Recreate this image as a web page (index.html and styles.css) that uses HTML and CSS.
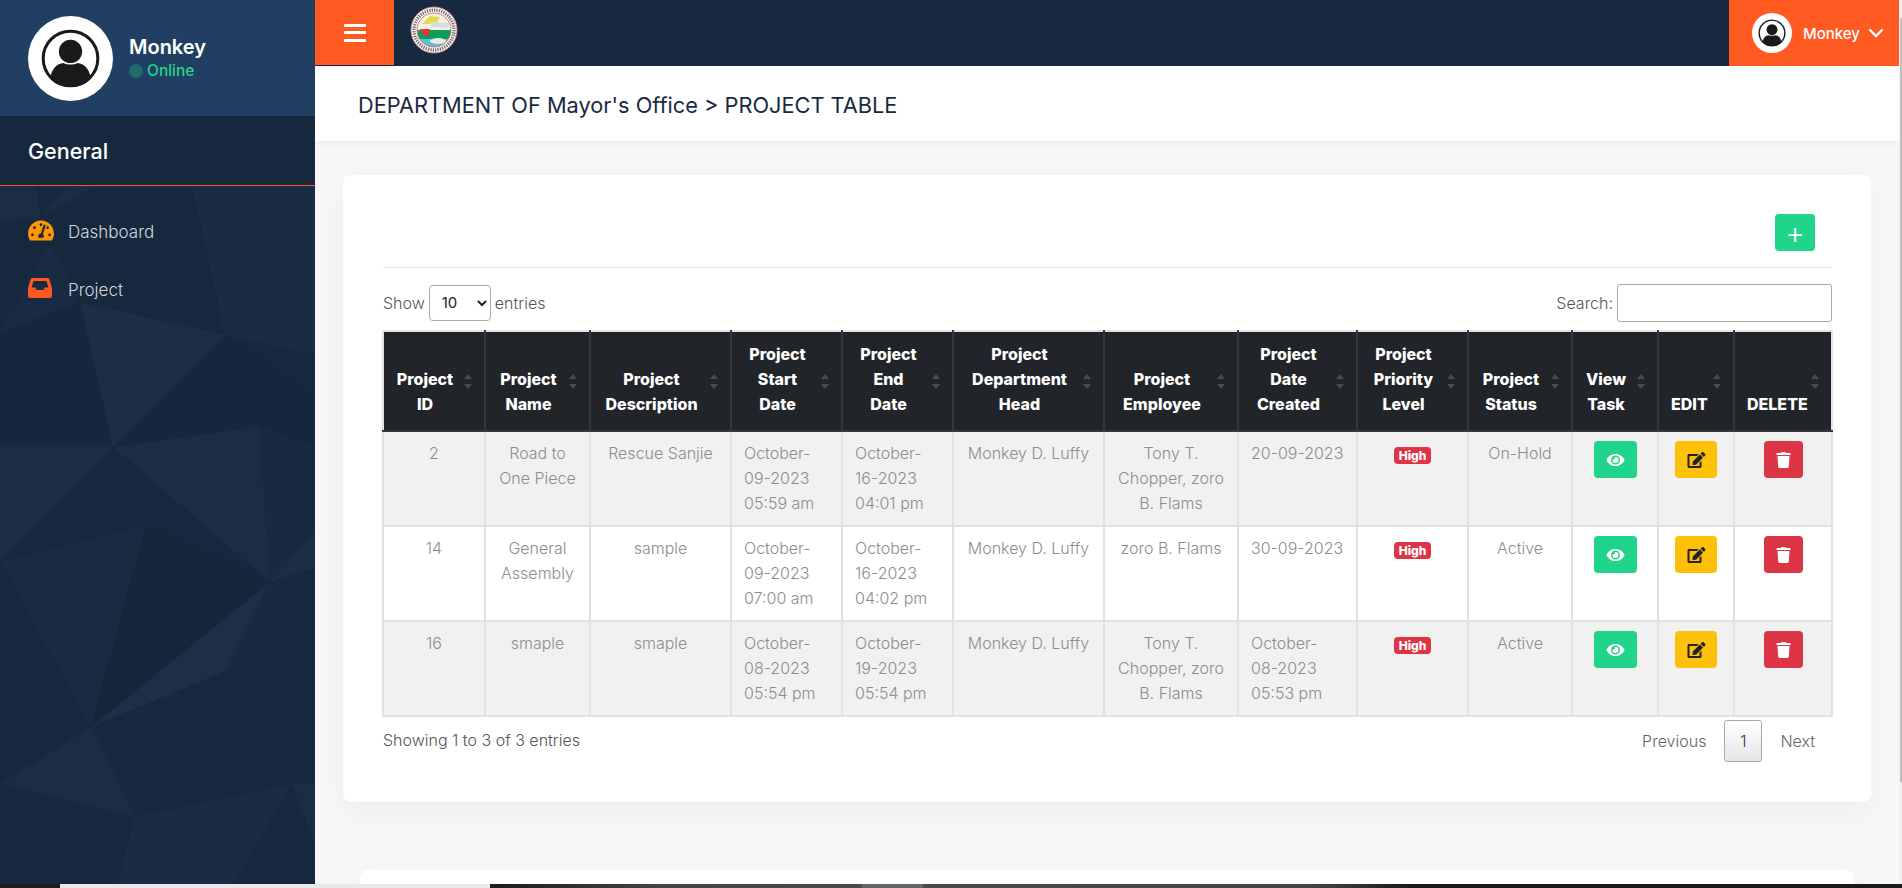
FILE: index.html
```html
<!DOCTYPE html>
<html lang="en">
<head>
  <meta charset="UTF-8" />
  <title>Project Table</title>
  <link rel="stylesheet" href="styles.css">
</head>
<body>
  <svg class="icon-defs" width="0" height="0">
    <symbol id="avatar" viewBox="0 0 84 84">
      <circle cx="42" cy="42" r="42" fill="#fff"/>
      <circle cx="42" cy="42" r="27" fill="none" stroke="#1a1a1c" stroke-width="3"/>
      <circle cx="42" cy="35" r="11.5" fill="#1a1a1c"/>
      <path d="M22 62c1-10 7-15 13-15.500c4 2 10 2 14 0c6 .5 12 5.500 13 15.500c-5 5-12 7.500-20 7.500s-15-2.500-20-7.500z" fill="#1a1a1c"/>
    </symbol>
    <symbol id="eye" viewBox="0 0 576 512">
      <path d="M572.52 241.4C518.29 135.59 410.93 64 288 64S57.68 135.64 3.48 241.41a32.35 32.35 0 0 0 0 29.19C57.71 376.41 165.07 448 288 448s230.32-71.64 284.52-177.41a32.35 32.35 0 0 0 0-29.19zM288 400a144 144 0 1 1 144-144 143.93 143.93 0 0 1-144 144zm0-240a95.31 95.31 0 0 0-25.31 3.79 47.85 47.85 0 0 1-66.9 66.9A95.78 95.78 0 1 0 288 160z"/>
    </symbol>
    <symbol id="edit" viewBox="0 0 576 512">
      <path d="M402.6 83.2l90.2 90.2c3.8 3.8 3.8 10 0 13.8L274.4 405.6l-92.8 10.3c-12.4 1.4-22.9-9.1-21.5-21.5l10.3-92.8L388.8 83.2c3.8-3.8 10-3.8 13.8 0zm162-22.900l-48.800-48.800c-15.200-15.200-39.900-15.200-55.200 0l-35.400 35.400c-3.800 3.800-3.800 10 0 13.800l90.200 90.200c3.800 3.800 10 3.800 13.800 0l35.400-35.400c15.200-15.300 15.200-40 0-55.200zM384 346.200V448H64V128h229.800c3.200 0 6.200-1.300 8.500-3.500l40-40c7.600-7.600 2.200-20.500-8.500-20.500H48C21.500 64 0 85.500 0 112v352c0 26.500 21.500 48 48 48h352c26.500 0 48-21.500 48-48V306.200c0-10.700-12.900-16-20.500-8.500l-40 40c-2.200 2.300-3.500 5.300-3.500 8.500z"/>
    </symbol>
    <symbol id="trash" viewBox="0 0 448 512">
      <path d="M432 32H312l-9.400-18.700A24 24 0 0 0 281.100 0H166.800a23.720 23.720 0 0 0-21.400 13.300L136 32H16A16 16 0 0 0 0 48v32a16 16 0 0 0 16 16h416a16 16 0 0 0 16-16V48a16 16 0 0 0-16-16zM53.200 467a48 48 0 0 0 47.900 45h245.800a48 48 0 0 0 47.900-45L416 128H32z"/>
    </symbol>
  </svg>

  <div class="app">
    <aside class="sidebar">
      <svg class="sidebar-bg" viewBox="0 0 315 698">
        <polygon points="0,0 36,0 40,31 0,36" fill="#1a2d44"/>
        <polygon points="40,31 67,0 97,0" fill="#1a2d44"/>
        <polygon points="192,0 315,0 315,169 225,149" fill="#192c43"/>
        <polygon points="0,147 50,58 80,116" fill="#192b42"/>
        <polygon points="0,147 80,116 113,261 0,261" fill="#15273c"/>
        <polygon points="80,116 225,149 113,261" fill="#1b2e45"/>
        <polygon points="113,261 259,240 270,396" fill="#1a2d44"/>
        <polygon points="225,149 315,210 315,260 259,240 113,261" fill="#15273c"/>
        <polygon points="259,240 315,260 315,347 270,396" fill="#182a41"/>
        <polygon points="0,261 113,261 0,375" fill="#1a2d44"/>
        <polygon points="0,375 146,340 91,541" fill="#182b41"/>
        <polygon points="146,340 270,396 91,541" fill="#15263b"/>
        <polygon points="91,541 270,396 226,485" fill="#1c2f47"/>
        <polygon points="270,396 315,347 315,382" fill="#1b2e45"/>
        <polygon points="270,396 315,440 315,515 226,485" fill="#172a40"/>
        <polygon points="0,598 91,541 135,631" fill="#1a2d44"/>
        <polygon points="135,631 292,598 233,698 117,698" fill="#192c43"/>
        <polygon points="292,598 315,598 315,658" fill="#1a2d44"/>
      </svg>
      <div class="user-panel">
        <svg class="avatar-lg"><use href="#avatar"/></svg>
        <div>
          <div class="user-name">Monkey</div>
          <div class="user-status"><span class="status-dot"></span>Online</div>
        </div>
      </div>
      <div class="nav-title">General</div>
      <nav class="nav">
        <a class="nav-item">
          <svg class="nav-icon icon-gauge" viewBox="0 0 576 512"><path d="M288 32C128.940 32 0 160.940 0 320c0 52.800 14.250 102.260 39.060 144.800 5.610 9.620 16.300 15.200 27.440 15.200h443c11.140 0 21.830-5.580 27.440-15.200C561.750 422.260 576 372.800 576 320c0-159.060-128.940-288-288-288zm0 64c14.710 0 26.580 10.130 30.320 23.650-1.110 2.260-2.640 4.230-3.450 6.670l-9.220 27.670c-5.130 3.490-10.970 6.010-17.640 6.010-17.670 0-32-14.330-32-32S270.330 96 288 96zM96 384c-17.670 0-32-14.330-32-32s14.330-32 32-32 32 14.330 32 32-14.330 32-32 32zm48-160c-17.670 0-32-14.330-32-32s14.330-32 32-32 32 14.330 32 32-14.330 32-32 32zm246.770-72.410l-61.330 184C343.130 347.330 352 364.540 352 384c0 11.720-3.380 22.550-8.880 32H232.880c-5.500-9.450-8.880-20.280-8.880-32 0-33.940 26.500-61.430 59.900-63.590l61.340-184.010c4.170-12.560 17.730-19.450 30.360-15.170 12.570 4.190 19.350 17.790 15.170 30.360zm14.660 57.200l15.520-46.550c3.470-1.290 7.130-2.230 11.050-2.230 17.670 0 32 14.330 32 32s-14.330 32-32 32c-11.380-.010-20.890-6.280-26.570-15.220zM480 384c-17.670 0-32-14.330-32-32s14.330-32 32-32 32 14.330 32 32-14.330 32-32 32z"/></svg>
          Dashboard
        </a>
        <a class="nav-item">
          <svg class="nav-icon icon-inbox" viewBox="0 0 24 20"><path fill-rule="evenodd" d="M4.500 0h15c1 0 1.700.6 2 1.500L24 10v8a2 2 0 0 1-2 2H2a2 2 0 0 1-2-2v-8L2.500 1.500C2.800.6 3.500 0 4.500 0zM5.500 3L3.600 9.500H7.500l1 2.500h7l1-2.500h3.900L18.500 3z"/></svg>
          Project
        </a>
      </nav>
    </aside>

    <div class="main">
      <header class="topbar">
        <button class="menu-toggle"><span></span><span></span><span></span></button>
        <svg class="seal" viewBox="0 0 48 48">
          <circle cx="24" cy="24" r="23" fill="#fff" stroke="#d98a8a" stroke-width="1"/>
          <circle cx="24" cy="24" r="20" fill="none" stroke="#777" stroke-width="3.400" stroke-dasharray="1.400 1"/>
          <clipPath id="seal-clip"><circle cx="24" cy="24" r="17"/></clipPath>
          <g clip-path="url(#seal-clip)">
            <rect x="6" y="6" width="36" height="36" fill="#f4f4ea"/>
            <polygon points="12,18 20,10 30,11 26,18" fill="#e2dc4c"/>
            <polygon points="20,16 40,17 38,22 22,21" fill="#dcdcdc"/>
            <rect x="6" y="24" width="36" height="9" fill="#0f9b58"/>
            <polygon points="10,23 20,23 19,29 14,30" fill="#e0363c"/>
            <rect x="6" y="33" width="36" height="10" fill="#5ec0d8"/>
            <ellipse cx="28" cy="35" rx="8" ry="3" fill="#e8e8e8"/>
          </g>
          <circle cx="24" cy="24" r="17" fill="none" stroke="#e0504f" stroke-width="0.800"/>
        </svg>
        <div class="topbar-user">
          <svg class="avatar-sm"><use href="#avatar"/></svg>
          <span class="topbar-name">Monkey</span>
          <svg class="chevron" viewBox="0 0 16 10"><path d="M1.500 1.500L8 8l6.500-6.500" fill="none" stroke="#fff" stroke-width="2.400"/></svg>
        </div>
      </header>

      <div class="page-head">
        <h1>DEPARTMENT OF Mayor's Office &gt; PROJECT TABLE</h1>
      </div>

      <div class="content">
        <section class="card">
          <div class="card-top">
            <button class="add-btn">+</button>
          </div>

          <div class="table-controls">
            <label class="ctl">Show
              <select class="length-select"><option>10</option></select>
              entries</label>
            <label class="ctl">Search:<input class="search-input" type="text" /></label>
          </div>

          <table class="data-table">
            <colgroup>
              <col class="c-id"><col class="c-name"><col class="c-desc"><col class="c-start"><col class="c-end"><col class="c-head"><col class="c-emp"><col class="c-created"><col class="c-prio"><col class="c-status"><col class="c-view"><col class="c-edit"><col class="c-del">
            </colgroup>
            <thead>
              <tr>
                <th class="sort">Project<br>ID</th>
                <th class="sort">Project<br>Name</th>
                <th class="sort">Project<br>Description</th>
                <th class="sort">Project<br>Start<br>Date</th>
                <th class="sort">Project<br>End<br>Date</th>
                <th class="sort">Project<br>Department<br>Head</th>
                <th class="sort">Project<br>Employee</th>
                <th class="sort">Project<br>Date<br>Created</th>
                <th class="sort">Project<br>Priority<br>Level</th>
                <th class="sort">Project<br>Status</th>
                <th class="sort">View<br>Task</th>
                <th class="sort th-left">EDIT</th>
                <th class="sort th-left">DELETE</th>
              </tr>
            </thead>
            <tbody>
              <tr>
                <td>2</td>
                <td>Road to<br>One Piece</td>
                <td>Rescue Sanjie</td>
                <td class="td-left">October-<br>09-2023<br>05:59 am</td>
                <td class="td-left">October-<br>16-2023<br>04:01 pm</td>
                <td>Monkey D. Luffy</td>
                <td>Tony T.<br>Chopper, zoro<br>B. Flams</td>
                <td class="td-left">20-09-2023</td>
                <td><span class="badge">High</span></td>
                <td>On-Hold</td>
                <td><button class="act act-view"><svg><use href="#eye"/></svg></button></td>
                <td><button class="act act-edit"><svg><use href="#edit"/></svg></button></td>
                <td><button class="act act-del"><svg><use href="#trash"/></svg></button></td>
              </tr>
              <tr>
                <td>14</td>
                <td>General<br>Assembly</td>
                <td>sample</td>
                <td class="td-left">October-<br>09-2023<br>07:00 am</td>
                <td class="td-left">October-<br>16-2023<br>04:02 pm</td>
                <td>Monkey D. Luffy</td>
                <td>zoro B. Flams</td>
                <td class="td-left">30-09-2023</td>
                <td><span class="badge">High</span></td>
                <td>Active</td>
                <td><button class="act act-view"><svg><use href="#eye"/></svg></button></td>
                <td><button class="act act-edit"><svg><use href="#edit"/></svg></button></td>
                <td><button class="act act-del"><svg><use href="#trash"/></svg></button></td>
              </tr>
              <tr>
                <td>16</td>
                <td>smaple</td>
                <td>smaple</td>
                <td class="td-left">October-<br>08-2023<br>05:54 pm</td>
                <td class="td-left">October-<br>19-2023<br>05:54 pm</td>
                <td>Monkey D. Luffy</td>
                <td>Tony T.<br>Chopper, zoro<br>B. Flams</td>
                <td class="td-left">October-<br>08-2023<br>05:53 pm</td>
                <td><span class="badge">High</span></td>
                <td>Active</td>
                <td><button class="act act-view"><svg><use href="#eye"/></svg></button></td>
                <td><button class="act act-edit"><svg><use href="#edit"/></svg></button></td>
                <td><button class="act act-del"><svg><use href="#trash"/></svg></button></td>
              </tr>
            </tbody>
          </table>

          <div class="table-footer">
            <div>Showing 1 to 3 of 3 entries</div>
            <div class="pager">
              <a>Previous</a>
              <a class="page-current">1</a>
              <a>Next</a>
            </div>
          </div>
        </section>

        <section class="card card-next"></section>
      </div>
    </div>

    <div class="scrollbar"><div class="scrollbar-thumb"></div></div>
  </div>

  <div class="taskbar">
    <div class="task-a"></div>
    <div class="task-b"></div>
    <div class="task-c"></div>
    <div class="task-d"></div>
    <div class="task-e"></div>
  </div>
</body>
</html>
```

FILE: styles.css
```css
* {
  box-sizing: border-box;
}

html, body {
  height: 100%;
}

body {
  margin: 0;
  height: 888px;
  overflow: hidden;
  display: flex;
  flex-direction: column;
  font-family: Inter, "Open Sans", sans-serif;
  font-weight: 300;
  font-size: 16px;
  color: #555;
  background: #f7f7f7;
}

.icon-defs {
  position: absolute;
}

.app {
  flex: 1;
  min-height: 0;
  display: flex;
}

/* sidebar */
.sidebar {
  position: relative;
  width: 315px;
  flex: none;
  background: #16283e;
  overflow: hidden;
}

.sidebar-bg {
  position: absolute;
  left: 0;
  top: 186px;
  width: 315px;
  height: 698px;
}

.user-panel {
  position: relative;
  height: 116px;
  display: flex;
  align-items: center;
  gap: 16px;
  padding-left: 28px;
  background: #203f62;
}

.avatar-lg {
  width: 85px;
  height: 85px;
}

.user-name {
  color: #fff;
  font-size: 20px;
  font-weight: 600;
  line-height: 26px;
}

.user-status {
  display: flex;
  align-items: center;
  gap: 4px;
  color: #20d489;
  font-size: 15.500px;
  font-weight: 500;
  line-height: 22px;
}

.status-dot {
  width: 14px;
  height: 14px;
  border-radius: 50%;
  background: #1f6b6b;
}

.nav-title {
  position: relative;
  height: 70px;
  padding: 22px 0 0 28px;
  color: #fff;
  font-size: 21.500px;
  font-weight: 500;
  border-bottom: 1px solid #ff5722;
}

.nav {
  position: relative;
  padding-top: 17px;
}

.nav-item {
  display: flex;
  align-items: center;
  height: 58px;
  padding-left: 28px;
  color: #d3d6da;
  font-size: 17px;
  font-weight: 300;
}

.nav-icon {
  width: 26px;
  height: 23px;
  margin: -4px 14px 0 0;
}

.icon-gauge {
  fill: #ff9800;
}

.icon-inbox {
  fill: #ff5722;
  width: 24px;
  height: 20px;
  margin-right: 16px;
}

/* main */
.main {
  flex: 1;
  min-width: 0;
  display: flex;
  flex-direction: column;
}

.topbar {
  height: 66px;
  flex: none;
  display: flex;
  align-items: flex-start;
  background: #17293f;
}

.menu-toggle {
  width: 79px;
  height: 65px;
  border: none;
  padding: 0;
  background: #ff5a22;
  display: flex;
  flex-direction: column;
  align-items: center;
  justify-content: center;
  gap: 4.500px;
}

.menu-toggle span {
  display: block;
  width: 22px;
  height: 3px;
  background: #fff;
  border-radius: 1px;
}

.seal {
  width: 48px;
  height: 48px;
  margin: 6px 0 0 16px;
}

.topbar-user {
  margin-left: auto;
  width: 170px;
  height: 66px;
  display: flex;
  align-items: center;
  padding-left: 23px;
  background: #ff5a22;
  color: #fff;
}

.avatar-sm {
  width: 40px;
  height: 40px;
}

.topbar-name {
  margin-left: 11px;
  font-size: 15px;
  font-weight: 500;
}

.chevron {
  width: 16px;
  height: 10px;
  margin-left: 8px;
}

.page-head {
  height: 75px;
  flex: none;
  display: flex;
  align-items: center;
  padding: 3px 0 0 43px;
  background: #fff;
  box-shadow: 0 2px 6px rgba(0, 0, 0, 0.05);
}

.page-head h1 {
  margin: 0;
  font-size: 21.750px;
  font-weight: 400;
  color: #1a2942;
}

.content {
  flex: 1;
  min-height: 0;
  overflow: hidden;
  padding: 34px 28px 0;
}

.card {
  height: 627px;
  padding: 0 39px 0 40px;
  background: #fff;
  border-radius: 8px;
  box-shadow: 0 10px 30px rgba(0, 0, 0, 0.04);
}

.card-next {
  height: 100px;
  margin: 68px 17px 0;
}

.card-top {
  height: 93px;
  display: flex;
  justify-content: flex-end;
  align-items: flex-start;
  padding: 39px 17px 0 0;
  border-bottom: 1px solid #e3e3e3;
}

.add-btn {
  width: 40px;
  height: 37px;
  border: none;
  border-radius: 4px;
  background: #20d489;
  color: #fff;
  font-family: Inter, sans-serif;
  font-size: 30px;
  font-weight: 300;
  line-height: 1;
  padding: 0;
}

.table-controls {
  display: flex;
  justify-content: space-between;
  align-items: center;
  height: 38px;
  margin-top: 16px;
}

.ctl {
  display: flex;
  align-items: center;
  gap: 4px;
}

.length-select {
  width: 62px;
  height: 36px;
  margin-top: -1px;
  padding: 0 4px 0 8px;
  border: 1px solid #aaa;
  border-radius: 4px;
  background: #fff;
  font-family: Inter, sans-serif;
  font-size: 15px;
  color: #222;
}

.search-input {
  width: 215px;
  height: 38px;
  border: 1px solid #aaa;
  border-radius: 3px;
  background: #fff;
}

/* table */
.data-table {
  width: 1449px;
  margin: 8px 0 0 -1px;
  border-collapse: collapse;
  table-layout: fixed;
  border-bottom: 2px solid #aaa;
}

.c-id { width: 102px; }
.c-name { width: 105px; }
.c-desc { width: 141px; }
.c-start { width: 111px; }
.c-end { width: 111px; }
.c-head { width: 151px; }
.c-emp { width: 134px; }
.c-created { width: 119px; }
.c-prio { width: 111px; }
.c-status { width: 104px; }
.c-view { width: 86px; }
.c-edit { width: 76px; }
.c-del { width: 98px; }

.data-table th {
  position: relative;
  height: 100px;
  padding: 10px 30px 13px 12px;
  vertical-align: bottom;
  text-align: center;
  line-height: 25px;
  font-size: 16px;
  font-weight: 800;
  color: #fff;
  background: #212529;
  border: 2px solid #32383e;
  border-top-color: #dee2e6;
}

.data-table th:first-child {
  border-left-color: #dee2e6;
}

.data-table th:last-child {
  border-right-color: #dee2e6;
}

.data-table th.th-left {
  text-align: left;
}

/* sort arrows */
.sort::before,
.sort::after {
  content: "";
  position: absolute;
  right: 12px;
  border-left: 4px solid transparent;
  border-right: 4px solid transparent;
}

.sort::before {
  top: calc(50% - 7px);
  border-bottom: 5px solid #494d52;
}

.sort::after {
  top: calc(50% + 3px);
  border-top: 5px solid #494d52;
}

.data-table td {
  height: 95px;
  padding: 9px 12px;
  vertical-align: top;
  text-align: center;
  line-height: 25px;
  color: #8d8d8d;
  border: 2px solid #dee2e6;
}

.data-table td.td-left {
  text-align: left;
}

.data-table tbody tr:nth-child(odd) td {
  background: #f1f1f1;
}

.badge {
  display: inline-block;
  padding: 0 5px;
  height: 17px;
  line-height: 17px;
  border-radius: 4px;
  background: #dc3545;
  color: #fff;
  font-size: 12px;
  font-weight: 800;
  vertical-align: -1px;
}

.act {
  height: 37px;
  border: none;
  border-radius: 4px;
  padding: 0;
  display: inline-flex;
  align-items: center;
  justify-content: center;
}

.act svg {
  width: 19px;
  height: 16px;
}

.act-view {
  width: 43px;
  background: #20d489;
  fill: #fff;
}

.act-edit {
  width: 42px;
  background: #ffc107;
  fill: #212529;
}

.act-del {
  width: 39px;
  background: #dc3545;
  fill: #fff;
}

.table-footer {
  display: flex;
  justify-content: space-between;
  align-items: flex-start;
  margin-top: 3px;
}

.table-footer > div:first-child {
  line-height: 40px;
}

.pager {
  display: flex;
  align-items: center;
  gap: 18px;
  padding-right: 17px;
  color: #666;
}

.page-current {
  width: 38px;
  height: 42px;
  display: flex;
  align-items: center;
  justify-content: center;
  border: 1px solid #aaa;
  border-radius: 3px;
  background: linear-gradient(to bottom, #fff, #e6e6e6);
  color: #333;
}

.scrollbar {
  width: 3px;
  flex: none;
  background: #f1f1f1;
}

.scrollbar-thumb {
  width: 2px;
  height: 764px;
  margin: 18px 0 0 1px;
  background: #c1c1c1;
}

.taskbar {
  height: 4px;
  flex: none;
  display: flex;
}

.task-a {
  width: 60px;
  background: #1c1c1c;
}

.task-b {
  width: 430px;
  background: #e8e8e8;
}

.task-c {
  width: 372px;
  background: linear-gradient(to right, #1c1c1c 0%, #444 45%, #4a4a4a 100%);
}

.task-d {
  width: 61px;
  background: #666;
}

.task-e {
  flex: 1;
  background: linear-gradient(to right, #4a4a4a 0%, #444 40%, #1a1a1a 50%, #1a1a1a 100%);
}
```
